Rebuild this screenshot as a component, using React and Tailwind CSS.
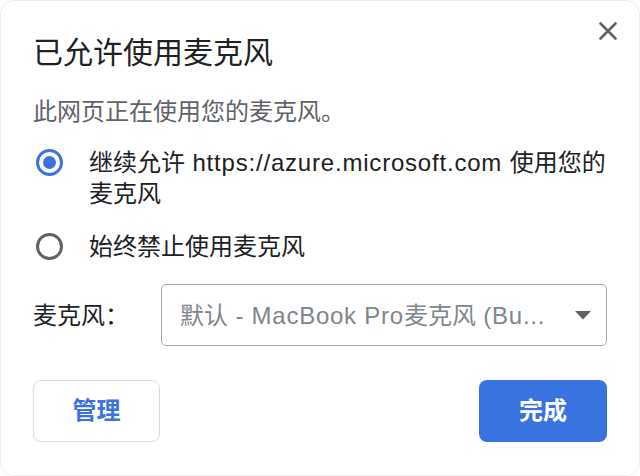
import React from "react";

const FONT = '"Liberation Sans", "Noto Sans CJK SC", sans-serif';

function Radio({ checked }) {
  return (
    <div className="flex h-[31px] w-[30px] shrink-0 items-center justify-center">
      {checked ? (
        <div className="flex h-[27px] w-[27px] items-center justify-center rounded-full border-[3px] border-[#3b74e2]">
          <div className="h-[13px] w-[13px] rounded-full bg-[#3b74e2]" />
        </div>
      ) : (
        <div className="h-[27px] w-[27px] rounded-full border-[3px] border-[#5f6368]" />
      )}
    </div>
  );
}

export default function App() {
  return (
    <div
      className="relative h-[476px] w-[640px] overflow-hidden rounded-[14px] border border-[#ececec] bg-white"
      style={{ fontFamily: FONT }}
    >
      <button className="absolute left-[597px] top-[20px] h-[20px] w-[20px]" aria-label="close">
        <svg width="20" height="20" viewBox="0 0 20 20">
          <path d="M2.5 2.5 L17.5 17.5 M17.5 2.5 L2.5 17.5" stroke="#5f6368" strokeWidth="2.6" strokeLinecap="round" />
        </svg>
      </button>

      <div className="flex flex-col px-[32px] pt-[34px]">
        <div className="text-[30px] leading-[36px] text-[#202124]">已允许使用麦克风</div>
        <div className="mt-[25px] text-[24px] leading-[32px] text-[#5f6368]">此网页正在使用您的麦克风。</div>

        <div className="mt-[19px] flex items-start gap-[25px] pl-[1px]">
          <Radio checked />
          <div className="text-[24px] leading-[31px] text-[#202124]">
            继续允许<span className="tracking-[0.8px]"> https://azure.microsoft.com </span>使用您的
            <br />
            麦克风
          </div>
        </div>

        <div className="mt-[22px] flex items-start gap-[25px] pl-[1px]">
          <Radio />
          <div className="text-[24px] leading-[31px] text-[#202124]">始终禁止使用麦克风</div>
        </div>

        <div className="mt-[22px] flex items-center">
          <div className="w-[128px] shrink-0 text-[24px] leading-[31px] text-[#202124]">麦克风：</div>
          <div className="flex h-[62px] flex-1 items-center justify-between rounded-[5px] border border-[#a4a7ab] pl-[18px] pr-[15px]">
            <span className="text-[24px] leading-[31px] text-[#80868b]">
              默认<span className="tracking-[0.75px]"> - MacBook Pro</span>麦克风<span className="tracking-[0.75px]"> (Bu...</span>
            </span>
            <svg width="16" height="9" viewBox="0 0 16 9">
              <path d="M0 0 L16 0 L8 8.5 Z" fill="#5f6368" />
            </svg>
          </div>
        </div>

        <div className="mt-[34px] flex items-center justify-between">
          <button className="flex h-[62px] w-[127px] items-center justify-center rounded-[8px] border border-[#dadce0] bg-white text-[24px] font-bold text-[#3b74e0]">
            管理
          </button>
          <button className="flex h-[62px] w-[128px] items-center justify-center rounded-[8px] bg-[#3873e0] text-[24px] font-bold text-white">
            完成
          </button>
        </div>
      </div>
    </div>
  );
}
